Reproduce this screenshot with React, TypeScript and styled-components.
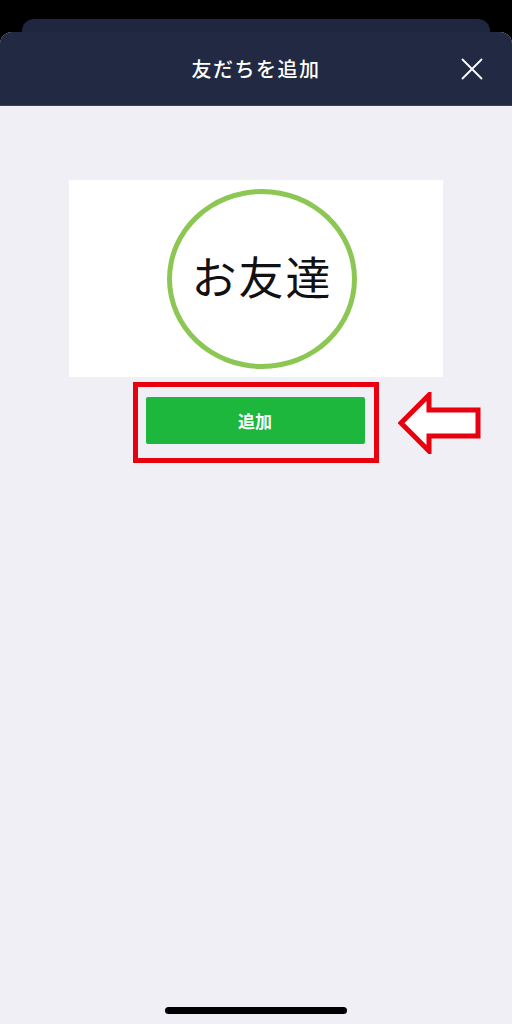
import React from "react";
import styled, { createGlobalStyle } from "styled-components";

const Global = createGlobalStyle`
    html, body {
        margin: 0;
        padding: 0;
        background: #000;
    }
    body {
        font-family: "Noto Sans CJK JP", "Noto Sans", sans-serif;
    }
`;

const Screen = styled.div`
    width: 512px;
    height: 1024px;
    background: #000;
    display: flex;
    flex-direction: column;
    overflow: hidden;
`;

const BackCard = styled.div`
    margin: 19px 22px 0;
    height: 20px;
    background: #1f2740;
    border-radius: 12px 12px 0 0;
    flex-shrink: 0;
`;

const Sheet = styled.div`
    margin-top: -7px;
    flex: 1;
    display: flex;
    flex-direction: column;
    background: #efeff5;
    border-radius: 12px 12px 0 0;
    overflow: hidden;
`;

const Header = styled.div`
    height: 73px;
    background: #222a43;
    border-bottom: 1px solid #3b4258;
    display: grid;
    grid-template-columns: 60px 1fr 60px;
    align-items: center;
    flex-shrink: 0;
`;

const Title = styled.h1`
    grid-column: 2;
    margin: 0;
    text-align: center;
    color: #fff;
    font-size: 20px;
    font-weight: 500;
    letter-spacing: 1.5px;
`;

const CloseButton = styled.button`
    grid-column: 3;
    justify-self: start;
    margin-left: 9px;
    padding: 0;
    border: none;
    background: none;
    display: flex;
    cursor: pointer;
`;

const Body = styled.div`
    flex: 1;
    display: flex;
    flex-direction: column;
    align-items: center;
    padding-top: 74px;
`;

const Banner = styled.div`
    width: 374px;
    height: 197px;
    background: #fff;
    display: flex;
    align-items: center;
    justify-content: center;
`;

const Ring = styled.div`
    width: 180px;
    height: 170px;
    border: 5px solid #8cc653;
    border-radius: 50%;
    display: flex;
    align-items: center;
    justify-content: center;
    margin-left: 12px;
`;

const RingText = styled.span`
    font-size: 45px;
    font-weight: 400;
    color: #111;
    letter-spacing: 2px;
    margin-top: -6px;
`;

const ActionRow = styled.div`
    width: 100%;
    margin-top: 5px;
    display: grid;
    grid-template-columns: 1fr auto 1fr;
    align-items: center;
`;

const Highlight = styled.div`
    grid-column: 2;
    width: 236px;
    height: 71px;
    border: 5px solid #e8000f;
    display: flex;
    align-items: center;
    justify-content: center;
`;

const AddButton = styled.button`
    width: 219px;
    height: 47px;
    border: none;
    border-radius: 2px;
    background: #1db73e;
    color: #fff;
    font-family: "Noto Sans CJK JP", sans-serif;
    font-size: 17px;
    font-weight: 700;
    cursor: pointer;
    margin-bottom: 4px;
    margin-right: 2px;
`;

const ArrowSlot = styled.div`
    padding-left: 19px;
    display: flex;
    align-items: center;
`;

const HomeBar = styled.div`
    align-self: center;
    width: 182px;
    height: 7px;
    border-radius: 4px;
    background: #000;
    margin: auto 0 10px;
`;

const App = () => {
    return (
        <Screen>
            <Global />
            <BackCard />
            <Sheet>
                <Header>
                    <Title>友だちを追加</Title>
                    <CloseButton aria-label="close">
                        <svg width="22" height="22" viewBox="0 0 22 22">
                            <path d="M1.5 1.5 L20.5 20.5 M20.5 1.5 L1.5 20.5" stroke="#fff" strokeWidth="1.8" strokeLinecap="round" />
                        </svg>
                    </CloseButton>
                </Header>
                <Body>
                    <Banner>
                        <Ring>
                            <RingText>お友達</RingText>
                        </Ring>
                    </Banner>
                    <ActionRow>
                        <Highlight>
                            <AddButton>追加</AddButton>
                        </Highlight>
                        <ArrowSlot>
                            {/* hollow red arrow pointing left */}
                            <svg width="84" height="62" viewBox="0 0 84 62">
                                <path
                                    d="M3 31 L31 3 L31 18 L80 18 L80 44 L31 44 L31 59 Z"
                                    fill="#fff"
                                    stroke="#e8000f"
                                    strokeWidth="5"
                                    strokeLinejoin="miter"
                                />
                            </svg>
                        </ArrowSlot>
                    </ActionRow>
                    <HomeBar />
                </Body>
            </Sheet>
        </Screen>
    );
};

export default App;
